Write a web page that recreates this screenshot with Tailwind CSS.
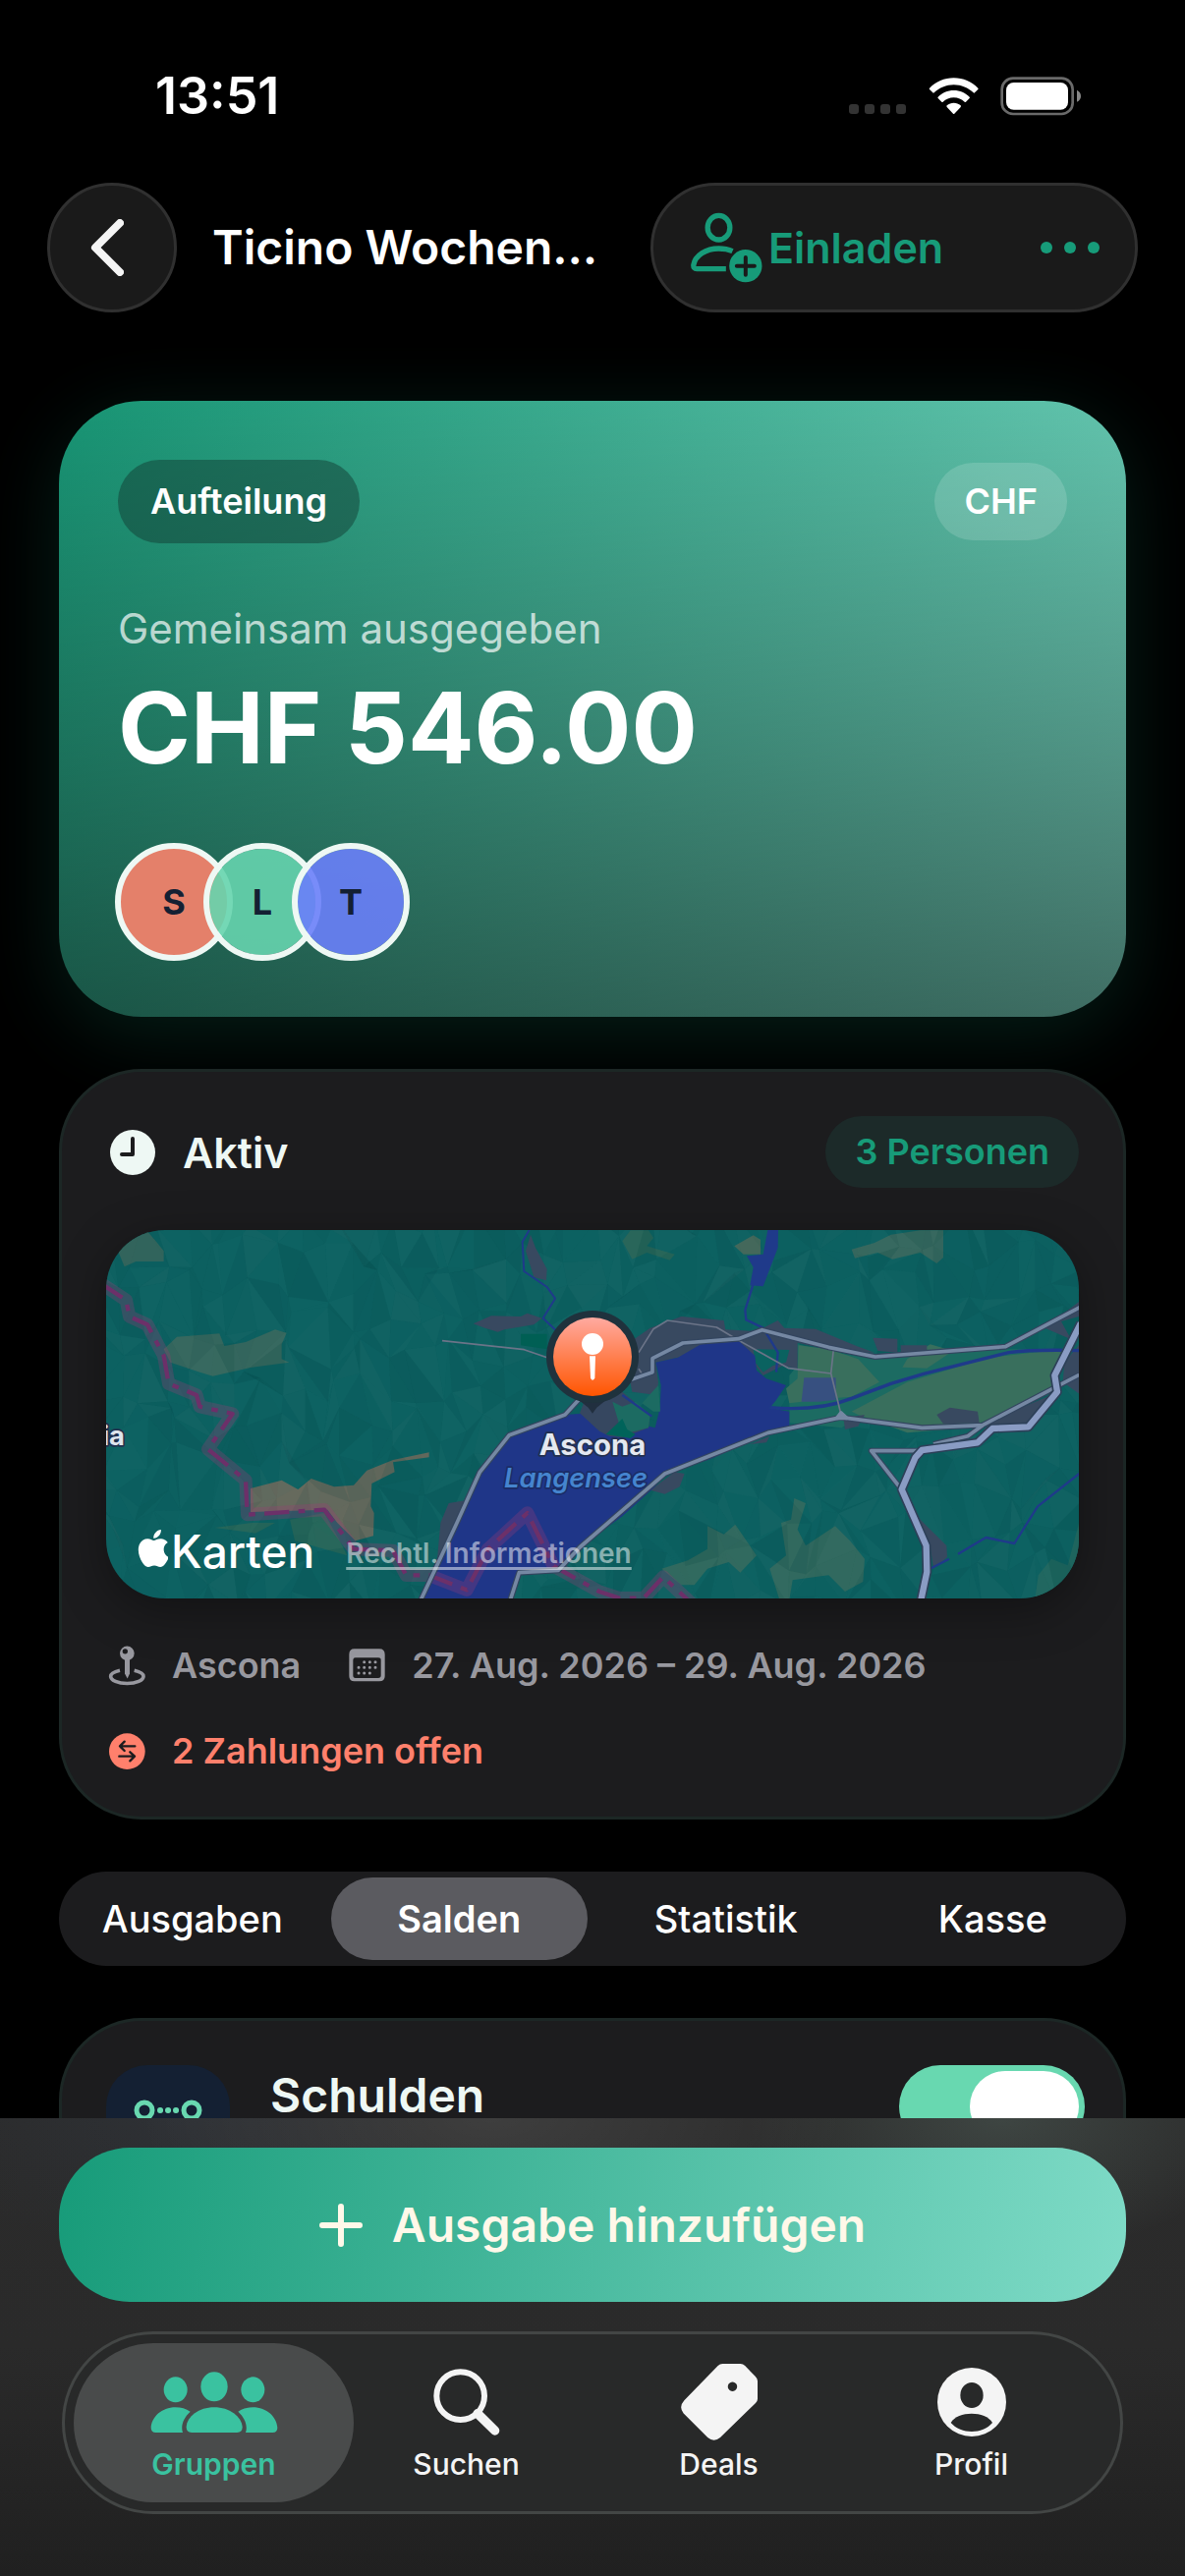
<!DOCTYPE html>
<html lang="de">
<head>
  <meta charset="UTF-8" />
  <meta name="viewport" content="width=device-width, initial-scale=1" />
  <title>Ticino Wochenende</title>
  <script src="https://cdn.jsdelivr.net/npm/@tailwindcss/browser@4"></script>
</head>
<body class="bg-black">
<div class="h-screen flex flex-col overflow-hidden bg-black text-white font-['Inter','Roboto',sans-serif]">

  <!-- Statusleiste -->
  <div class="flex items-center justify-between shrink-0 h-[72px] mt-[62px] pl-[158px] pr-[106px]">
    <span class="text-[52px] leading-[60px] font-semibold">13:51</span>
    <div class="flex items-center gap-[22px]">
      <svg class="w-[59px] h-[38px]" viewBox="0 0 59 38" fill="#333">
        <rect x="0" y="27" width="10" height="10" rx="3"/><rect x="16" y="27" width="10" height="10" rx="3"/>
        <rect x="32" y="27" width="10" height="10" rx="3"/><rect x="48" y="27" width="10" height="10" rx="3"/>
      </svg>
      <svg class="w-[51px] h-[38px]" viewBox="855 56 153 114" fill="#fff">
        <path d="M932 57c29 0 55 12 74 31q2 2 0 4l-10 10q-2 2-4 0c-16-15-37-24-60-24s-44 9-60 24q-2 2-4 0l-10-10q-2-2 0-4c19-19 45-31 74-31z"/>
        <path d="M932 95c19 0 36 8 48 20q2 2 0 4l-11 11q-2 2-4 0c-9-8-20-13-33-13s-24 5-33 13q-2 2-4 0l-11-11q-2-2 0-4c12-12 29-20 48-20z"/>
        <path d="M932 133c8 0 15 3 21 8q2 2 0 5l-19 20q-2 2-4 0l-19-20q-2-3 0-5c6-5 13-8 21-8z"/>
      </svg>
      <svg class="w-[82px] h-[40px]" viewBox="1074 53 246 120">
        <rect x="1079" y="58" width="216" height="109" rx="34" fill="none" stroke="#6a6a6a" stroke-width="8"/>
        <rect x="1092" y="71" width="189" height="83" rx="23" fill="#fff"/>
        <path d="M1308 94q12 6 12 18t-12 18z" fill="#888"/>
      </svg>
    </div>
  </div>

  <!-- Navigation -->
  <header class="flex items-center shrink-0 mt-[52px] px-[48px]">
    <button aria-label="Zurück" class="size-[132px] shrink-0 rounded-full border-[3px] border-[#303030] bg-[#1a1a1a] flex items-center justify-center">
      <svg class="w-[34px] h-[58px] -ml-[10px]" viewBox="0 0 34 58" fill="none" stroke="#f4f4f4" stroke-width="8" stroke-linecap="round" stroke-linejoin="round"><path d="M30 4 5 29l25 25"/></svg>
    </button>
    <h1 class="flex-1 pl-[36px] text-[48px] leading-[60px] font-semibold whitespace-nowrap">Ticino Wochen…</h1>
    <div class="flex items-center justify-between h-[132px] w-[496px] shrink-0 rounded-full border-[3px] border-[#303030] bg-[#1a1a1a] pl-[38px] pr-[36px] text-[#179b79]">
      <button class="flex items-center gap-[6px] text-[43px] leading-[54px] font-semibold">
        <svg class="w-[73px] h-[72px]" viewBox="128 464 218 216" fill="none" stroke="currentColor" stroke-width="16">
          <ellipse cx="213" cy="511" rx="34" ry="37"/>
          <path d="M235 637H146q-11 0-10-12c5-28 37-50 77-50q24 0 42 8"/>
          <circle cx="295" cy="628" r="50" fill="currentColor" stroke="none"/>
          <path d="M295 602v53M268 628h54" stroke="#1a1a1a" stroke-width="12" stroke-linecap="round"/>
        </svg>
        Einladen
      </button>
      <button aria-label="Mehr" class="h-[60px]">
        <svg class="w-[60px] h-[12px]" viewBox="0 0 60 12" fill="currentColor"><circle cx="6" cy="6" r="6"/><circle cx="30" cy="6" r="6"/><circle cx="54" cy="6" r="6"/></svg>
      </button>
    </div>
  </header>

  <main class="flex-1 min-h-0 overflow-hidden flex flex-col gap-[53px] px-[60px] pt-[90px]">

    <!-- Summe -->
    <section class="shrink-0 rounded-[84px] px-[60px] pt-[60px] pb-[57px] bg-[linear-gradient(to_bottom,rgba(0,0,0,0.04),rgba(0,0,0,0.5)),linear-gradient(120deg,#189a78,#7fdbc7)] shadow-[0_16px_80px_rgba(24,153,122,0.2)]">
      <div class="flex items-center justify-between text-[36px] leading-[45px] font-semibold">
        <span class="rounded-full bg-[#123e33]/50 px-[33px] py-[20px]">Aufteilung</span>
        <span class="rounded-full bg-white/15 px-[30px] py-[17px]">CHF</span>
      </div>
      <p class="mt-[60px] text-[42px] leading-[54px] text-white/70">Gemeinsam ausgegeben</p>
      <p class="mt-[16px] text-[100px] leading-[116px] font-bold">CHF 546.00</p>
      <div class="flex mt-[59px] -ml-[3px] text-[36px] leading-[45px] font-bold text-[#142033]">
        <span class="size-[120px] rounded-full border-[6px] border-[#eef8f4] bg-[#e4806a] flex items-center justify-center">S</span>
        <span class="size-[120px] -ml-[30px] rounded-full border-[6px] border-[#eef8f4] bg-[#66d4ae]/90 bg-clip-padding flex items-center justify-center">L</span>
        <span class="size-[120px] -ml-[30px] rounded-full border-[6px] border-[#eef8f4] bg-[#6a80fa]/90 bg-clip-padding flex items-center justify-center">T</span>
      </div>
    </section>

    <!-- Gruppe -->
    <section class="shrink-0 rounded-[84px] border-[3px] border-[#1c2725] bg-[#1c1c1e] px-[45px] pt-[45px] pb-[43px]">
      <div class="flex items-center justify-between">
        <div class="flex items-center gap-[28px] pl-[4px] text-[43px] leading-[54px] font-semibold text-[#eef8f4]">
          <svg class="size-[46px]" viewBox="0 0 46 46"><circle cx="23" cy="23" r="23" fill="#eef8f4"/><path d="M23 9v16H12" fill="none" stroke="#1c1c1e" stroke-width="4" stroke-linecap="round" stroke-linejoin="round"/></svg>
          Aktiv
        </div>
        <span class="rounded-full bg-[#1c2a29] px-[30px] py-[14px] text-[36px] leading-[45px] font-semibold text-[#179b79]">3 Personen</span>
      </div>

      <div class="relative mt-[43px] h-[375px] rounded-[60px] overflow-hidden shadow-[0_12px_48px_rgba(0,0,0,0.35)]">
        <svg class="w-full h-full" viewBox="24 36 2970 1125" preserveAspectRatio="xMidYMid slice" stroke-linejoin="round">
          <defs>
            <linearGradient id="pin" x1="0" y1="0" x2="0" y2="1"><stop offset="0" stop-color="#ffaaa0"/><stop offset="1" stop-color="#ff5500"/></linearGradient>
          </defs>
          <rect x="0" y="0" width="3010" height="1200" fill="#0d6262"/>
          <!-- Wiesen und Fels -->
          <g fill="#37695f">
            <path d="M60 100 100 50 150 40 180 75 200 100V132H115L80 148z"/>
            <path d="M200 400 240 362 370 352 385 390 450 378 540 340 575 350 560 385 560 430 583 440 470 455 350 482 310 470 220 440z"/>
            <path d="M585 920 690 900 740 990 760 1030 600 985z" fill="#26685b"/>
            <path d="M355 945 470 930 540 930 480 962z" fill="#26685b"/>
          </g>
          <path d="M465 825 560 800 610 828 650 795 720 820 780 815 820 770 900 738 1010 715 1010 730 900 745 905 775 835 810 832 880 842 900 840 970 785 985 730 930 700 890 465 897z" fill="#666a5d"/>
          <g transform="translate(1470 0)">
            <path d="M130 70 155 37H210L225 60 205 85 290 110 275 128 205 105 160 125z" fill="#276659"/>
            <path d="M472 85 530 52 552 65V110H500z" fill="#44695b"/>
            <path d="M830 95 900 75 950 50 1040 37H1110V120L1090 138 1040 105 955 125 910 105 840 122z" fill="#37695f"/>
            <path d="M250 1070 330 1045 390 1010V940L440 965 475 935 540 1030 490 1082 455 1050 390 1070 350 1120 310 1120z" fill="#316a5f"/>
            <path d="M655 855 690 870 665 950 690 1000 780 940 825 985 870 1040 865 1110 810 1140 760 1090 650 1105 640 1165 610 1165 580 1070 630 1030 615 930 645 920z" fill="#316a5f"/>
            <path d="M1400 1090 1440 1040 1490 1060 1524 930 1530 1165H1390z" fill="#206860"/>
          </g>
          <g id="terrain"></g>
          <g transform="translate(1470 0)">
            <!-- Ebene -->
            <path d="M640 600 640 480 665 450 665 385 780 410 900 430 1140 410 1300 400 1480 400 1450 520 1200 630 1010 640 860 605 800 640 640 625z" fill="#1c6b62"/>
            <path d="M668 388 760 400 850 430 915 500 830 545 770 550 640 565 630 520 665 490z M1070 385 1140 405 1060 458 985 455 1000 430z M830 590 1000 500 1250 425 1475 400 1440 520 1320 590 1180 640 1000 655 850 600z" fill="#396f5d"/>
            <path d="M685 487H782V555L730 560 677 560z" fill="#375080"/>
            <!-- Siedlungen -->
            <path d="M165 370 215 335 310 300 440 312 445 340 540 345 605 312 625 335 720 338 845 390 900 410 780 405 665 380 665 460 620 450 560 480 500 400 480 370 300 425 232 440 240 500 235 540 160 530 150 480z M895 365 970 368 970 410 910 405z M980 388 1060 388V410H980z M1090 600 1130 578 1215 590 1220 625 1110 628z M805 610 870 600 850 635 810 645z M1230 650 1260 615 1440 540 1370 635z M1420 335 1524 255V300L1470 315 1500 370z M1480 440 1530 380V540L1475 500z M1000 840 1040 920 1120 1000 1122 1035 1080 1070 1070 1000z M215 830 290 775 320 780 305 820 260 842z M520 690 580 665 570 685z" fill="#384960"/>
            <path d="M530 400 640 402 630 440 590 450 560 470 535 440z" fill="#0a6260"/>
          </g>
          <path d="M1145 322 1200 298 1290 300 1310 290 1355 305 1330 325 1240 340 1220 347 1180 335z M1320 50 1335 90 1370 155 1368 190 1330 180 1305 100z M1070 870 1130 860 1140 900 1090 960 1035 1040 1045 930z" fill="#384960"/>
          <path d="M1290 353H1370V400L1290 388z" fill="#005f54"/>
          <!-- See -->
          <path d="M978 1161 1040 1030 1110 900 1165 775 1255 662 1425 600 1500 595 1700 640 1715 580 1718 510 1702 440 1770 425 1840 385 1950 370 2005 420 2010 465 2040 490 2100 510 2070 555 2050 580 2110 590 2110 640 2045 655 1870 735 1730 780 1700 820 1600 910 1470 1005 1405 1075 1285 1080 1255 1161z" fill="#1f3688"/>
          <path d="M1470 595 1500 520 1600 530 1685 600 1680 640 1600 670 1560 665 1530 650z" fill="#364760"/>
          <path d="M1570 560 1600 575 1640 560 1685 600 1680 640 1600 660z M1660 565 1710 510 1716 590 1695 590z" fill="#1c6b62"/>
          <path d="M1550 660 1600 612 1615 645 1640 660 1625 672z" fill="#00635a"/>
          <!-- Flüsse -->
          <g fill="none" stroke="#1f3a8a" stroke-width="6">
            <path d="M1316 36 1295 72 1300 162 1370 210 1395 245 1358 305 1400 345"/>
            <path d="M2000 200 1975 280 1978 310 2030 335 2075 410 2070 470M1600 540 1690 605M2625 1025 2710 975 2797 993 2868 880 2995 780M2540 1070 2598 1040" stroke-width="7"/>
            <path d="M2050 578Q2200 590 2300 550L2420 505 2520 475 2780 410Q2860 400 3000 404" stroke-width="10"/>
          </g>
          <path d="M2044 36H2076L2075 90 2030 208 1990 205 2000 150 1980 115 2030 110z" fill="#1f3a8a"/>
          <!-- Landesgrenze -->
          <g fill="none">
            <path d="M10 200 85 250 95 300 150 325 200 420 215 505 300 540 310 575 410 597 335 705 450 800 455 905 690 890 780 1010 900 1015 940 1090 1010 1090 1125 1135 1190 1010 1310 900 1390 1062 1530 1140 1590 1160 1665 1160 1725 1095 1810 1175" stroke="#a03a78" stroke-opacity=".28" stroke-width="40"/>
            <path d="M10 200 85 250 95 300 150 325 200 420 215 505 300 540 310 575 410 597 335 705 450 800 455 905 690 890 780 1010 900 1015 940 1090 1010 1090 1125 1135 1190 1010 1310 900 1390 1062 1530 1140 1590 1160 1665 1160 1725 1095 1810 1175" stroke="#6c3069" stroke-width="13" stroke-dasharray="76 28 20 28"/>
          </g>
          <!-- Strassen -->
          <g fill="none" stroke="#6b7488" stroke-width="5">
            <path d="M1050 374 1300 401 1390 432M1650 410 1695 338 1738 312 1888 333 1950 370 2108 458 2237 474 2245 400M2237 474 2268 600M1650 460 1660 475"/>
          </g>
          <g fill="none" stroke="#33455f" stroke-width="18">
            <path d="M978 1180 1095 930 1165 775 1255 662 1425 600 1480 540 1620 495 1692 470V428L1785 381 1955 368 2027 341 2230 394 2372 423 2770 392 3000 270"/>
            <path d="M1255 1175 1285 1082 1405 1075 1470 1005 1730 780 2045 655 2268 608 2515 640 2700 632 2995 478"/>
            <path d="M2550 690 2655 665 2700 632M2510 710H2360L2450 825"/>
          </g>
          <g fill="none" stroke="#7588a3" stroke-width="11">
            <path d="M978 1180 1095 930 1165 775 1255 662 1425 600 1480 540 1620 495 1692 470V428L1785 381 1955 368 2027 341 2230 394 2372 423 2770 392 3000 270"/>
            <path d="M1255 1175 1285 1082 1405 1075 1470 1005 1730 780 2045 655 2268 608 2515 640 2700 632 2995 478"/>
            <path d="M2550 690 2655 665 2700 632M2510 710H2360L2450 825"/>
            <path d="M2255 610 2268 594 2285 610z" fill="#7588a3"/>
          </g>
          <path d="M2510 1175 2530 1080 2528 1000 2453 828 2495 730 2515 708 2685 685 2730 642 2840 637 2928 530 2920 480 3000 320" fill="none" stroke="#2d4059" stroke-width="29"/>
          <path d="M2510 1175 2530 1080 2528 1000 2453 828 2495 730 2515 708 2685 685 2730 642 2840 637 2928 530 2920 480 3000 320" fill="none" stroke="#8a9cc4" stroke-width="19"/>
          <!-- Pin -->
          <path d="M1455 545H1563L1522 578 1509 596 1496 578z" fill="#212f3f"/>
          <circle cx="1509" cy="423" r="141" fill="#1f323d"/>
          <circle cx="1509" cy="423" r="120" fill="url(#pin)"/>
          <circle cx="1509" cy="384" r="33" fill="#fff"/>
          <path d="M1500 421H1518L1516 488Q1509 500 1503 488z" fill="#fff"/>
          <!-- Ortsnamen -->
          <g font-weight="700" text-anchor="middle" paint-order="stroke" stroke="#22304f" stroke-width="10">
            <text x="1509" y="722" font-size="88" fill="#e4e8f0">Ascona</text>
            <text x="46" y="693" font-size="82" fill="#dfe4ec">ia</text>
            <text x="1458" y="822" font-size="82" font-style="italic" font-weight="600" fill="#4585cf" stroke="#1b2d66">Langensee</text>
          </g>
        </svg>
        <div class="absolute left-[32px] bottom-[18px] flex items-end gap-[32px]">
          <div class="flex items-center gap-[3px] text-[46px] leading-[60px] font-medium">
            <svg class="w-[31px] h-[38px] -mt-[6px]" viewBox="2 0 19 24" fill="#fff"><path d="M12.152 6.896c-.948 0-2.415-1.078-3.96-1.04-2.04.027-3.91 1.183-4.961 3.014-2.117 3.675-.546 9.103 1.519 12.09 1.013 1.454 2.208 3.09 3.792 3.039 1.52-.065 2.09-.987 3.935-.987 1.831 0 2.35.987 3.96.948 1.637-.026 2.676-1.48 3.676-2.948 1.156-1.688 1.636-3.325 1.662-3.415-.039-.013-3.182-1.221-3.22-4.857-.026-3.04 2.48-4.494 2.597-4.559-1.429-2.09-3.623-2.324-4.39-2.376-2-.156-3.675 1.09-4.61 1.09zM15.53 3.83c.843-1.012 1.4-2.427 1.245-3.83-1.207.052-2.662.805-3.532 1.818-.78.896-1.454 2.338-1.273 3.714 1.338.104 2.715-.688 3.559-1.701"/></svg>
            Karten
          </div>
          <a href="#" class="pb-[12px] text-[28px] leading-[32px] font-semibold text-white/50 underline underline-offset-4 decoration-3">Rechtl. Informationen</a>
        </div>
      </div>

      <div class="flex items-center gap-[46px] mt-[44px] text-[36px] leading-[48px] font-semibold text-[#98989f]">
        <div class="flex items-center gap-[24px]">
          <svg class="w-[43px] h-[41px]" viewBox="24 47 129 122">
            <path d="M66 122c-18 4-28 10-28 18 0 12 22 22 50 22s50-10 50-22c0-8-10-14-28-18" fill="none" stroke="currentColor" stroke-width="11"/>
            <circle cx="88" cy="70" r="22" fill="currentColor"/><circle cx="82" cy="64" r="8" fill="#1c1c1e"/>
            <path d="M81 88h15v44l-7 15-8-15z" fill="currentColor"/>
          </svg>
          Ascona
        </div>
        <div class="flex items-center gap-[24px]">
          <svg class="w-[43px] h-[34px]" viewBox="746 50 129 102">
            <path fill-rule="evenodd" d="M772 51h76q17 0 17 17v66q0 16-17 16h-76q-16 0-16-16V68q0-17 16-17zM775 78q-7 0-7 7v47q0 8 7 8h70q8 0 8-8V85q0-7-8-7z" fill="currentColor"/>
            <path d="M802 91h.1M819 91h.1M836 91h.1M785 108h.1M802 108h.1M819 108h.1M836 108h.1M785 125h.1M802 125h.1M819 125h.1" stroke="currentColor" stroke-width="9" stroke-linecap="round"/>
          </svg>
          27. Aug. 2026 – 29. Aug. 2026
        </div>
      </div>
      <div class="flex items-center gap-[24px] mt-[39px] text-[36px] leading-[48px] font-semibold text-[#ff806c]">
        <svg class="w-[43px] h-[37px]" viewBox="24 312 129 111">
          <circle cx="88" cy="368" r="55" fill="currentColor"/>
          <path d="M112 352H66M80 338 66 352l14 14M64 383h46M97 370l14 13-14 14" fill="none" stroke="#1c1c1e" stroke-width="7" stroke-linecap="round" stroke-linejoin="round"/>
        </svg>
        2 Zahlungen offen
      </div>
    </section>

    <!-- Ansicht -->
    <div class="shrink-0 grid grid-cols-4 h-[96px] py-[6px] rounded-full bg-[#1c1c1e] text-[38px] leading-[48px]">
      <button class="mx-[5px] rounded-full font-medium">Ausgaben</button>
      <button class="mx-[5px] rounded-full bg-[#5b5b60] font-semibold">Salden</button>
      <button class="mx-[5px] rounded-full font-medium">Statistik</button>
      <button class="mx-[5px] rounded-full font-medium">Kasse</button>
    </div>

    <section class="shrink-0 flex items-start rounded-[84px] border-[3px] border-[#1c2725] bg-[#1c1c1e] p-[45px]">
      <div class="size-[126px] rounded-[42px] bg-[#142033]">
        <svg class="w-full h-full" viewBox="0 0 126 126" fill="none" stroke="#68d8b0" stroke-width="5">
          <circle cx="39" cy="46" r="8"/><circle cx="87" cy="46" r="8"/>
          <path d="M55 46h.1M63 46h.1M71 46h.1" stroke-linecap="round" stroke-width="6"/>
        </svg>
      </div>
      <label for="debts" class="flex-1 ml-[41px] text-[48px] leading-[62px] font-semibold text-[#eef8f4]">Schulden</label>
      <input id="debts" type="checkbox" role="switch" checked class="appearance-none w-[189px] h-[84px] -mr-[6px] p-[6px] flex justify-end rounded-full bg-[#48484a] checked:bg-[#68d8b0] before:content-[''] before:w-[111px] before:h-[72px] before:rounded-full before:bg-white" />
    </section>
  </main>

  <footer class="shrink-0 px-[60px] pt-[30px] pb-[63px] bg-[#222] bg-[radial-gradient(360px_150px_at_500px_0,rgba(255,255,255,0.09),transparent),radial-gradient(260px_140px_at_1020px_0,rgba(170,220,200,0.15),transparent),radial-gradient(260px_140px_at_180px_0,rgba(60,80,110,0.15),transparent),linear-gradient(to_bottom,#2b2b2b,#2a2a2a_50%,#202020)]">
    <button class="w-full h-[157px] flex items-center justify-center gap-[30px] rounded-[72px] bg-[linear-gradient(100deg,#179b79,#7fdbc7)] text-[48px] leading-[60px] font-semibold text-[#fff8e9]">
      <svg class="size-[44px]" viewBox="0 0 44 44" fill="none" stroke="currentColor" stroke-width="6" stroke-linecap="round"><path d="M22 3v38M3 22h38"/></svg>
      Ausgabe hinzufügen
    </button>

    <nav class="grid grid-cols-4 h-[186px] mt-[30px] mx-[3px] px-[23px] rounded-full border-[3px] border-[#434645] bg-[#282929] text-[30px] leading-[36px] font-medium text-[#f4f4f4]">
      <a href="#" aria-current="page" class="relative flex flex-col items-center justify-center gap-[6px] text-[#3ac2a0] font-semibold">
        <span class="absolute inset-y-[9px] -inset-x-[14px] rounded-full bg-[#494b4b]"></span>
        <span class="relative h-[78px] flex items-center">
          <svg class="w-[130px] h-[62px]" viewBox="277 161 390 186" fill="currentColor">
            <ellipse cx="472" cy="207" rx="41" ry="45"/><ellipse cx="354" cy="216" rx="36" ry="39"/><ellipse cx="590" cy="216" rx="36" ry="39"/>
            <path d="M403 347q-16 0-16-17c2-32 38-60 85-60s83 28 86 60q0 17-16 17z"/>
            <path d="M376 347h-82q-15 0-15-15c2-32 32-62 75-62q25 0 45 13c-21 19-30 43-23 64zM568 347h82q15 0 15-15c-2-32-32-62-75-62q-25 0-45 13c21 19 30 43 23 64z"/>
          </svg>
        </span>
        <span class="relative">Gruppen</span>
      </a>
      <a href="#" class="flex flex-col items-center justify-center gap-[6px]">
        <span class="h-[78px] flex items-center">
          <svg class="size-[68px]" viewBox="1145 154 204 204" fill="none" stroke="currentColor"><circle cx="1228" cy="237" r="73" stroke-width="18"/><path d="m1280 291 53 52" stroke-width="28" stroke-linecap="round"/></svg>
        </span>
        Suchen
      </a>
      <a href="#" class="flex flex-col items-center justify-center gap-[6px]">
        <span class="h-[78px] flex items-center">
          <svg class="size-[78px]" viewBox="0 0 232 232" fill="currentColor"><path fill-rule="evenodd" d="M126 0H180Q188 0 194 6L225 38Q232 45 232 52V106Q232 113 226 119L119 223Q100 239 81 223L8 150Q-8 131 10 111L112 6Q118 0 126 0zM156 55a14 14 0 1 0 .1 0z"/></svg>
        </span>
        Deals
      </a>
      <a href="#" class="flex flex-col items-center justify-center gap-[6px]">
        <span class="h-[78px] flex items-center">
          <svg class="size-[70px]" viewBox="0 0 210 210" fill="currentColor"><circle cx="105" cy="105" r="105"/><g fill="#282929"><ellipse cx="105" cy="84" rx="35" ry="39"/><path d="M41 168C62 131 147 131 168 168 138 204 72 204 41 168z"/></g></svg>
        </span>
        Profil
      </a>
    </nav>
  </footer>
</div>

<script>
  // Relief: verzerrtes Dreiecksnetz mit leichten Schattierungen
  let seed = 7;
  const rnd = () => (seed = (seed * 16807) % 2147483647) / 2147483647;
  const cols = 44, rows = 12, pts = [];
  for (let r = 0; r <= rows; r++) {
    pts.push([]);
    for (let c = 0; c <= cols; c++) {
      pts[r].push([Math.round(c * 70 - 20 + (rnd() - 0.5) * 70), Math.round(r * 105 + (rnd() - 0.5) * 110)]);
    }
  }
  let out = '';
  const tri = (a, b, c) => {
    const v = rnd();
    const fill = v < 0.6 ? '#003c40' : '#3c6c6c';
    const alpha = (v < 0.6 ? (0.6 - v) * 0.28 : (v - 0.6) * 0.3).toFixed(2);
    out += `<polygon points="${a} ${b} ${c}" fill="${fill}" fill-opacity="${alpha}"/>`;
  };
  for (let r = 0; r < rows; r++) {
    for (let c = 0; c < cols; c++) {
      const a = pts[r][c], b = pts[r][c + 1], d = pts[r + 1][c], e = pts[r + 1][c + 1];
      if (rnd() < 0.5) { tri(a, b, d); tri(b, e, d); } else { tri(a, b, e); tri(a, e, d); }
    }
  }
  document.getElementById('terrain').innerHTML = out;
</script>
</body>
</html>
